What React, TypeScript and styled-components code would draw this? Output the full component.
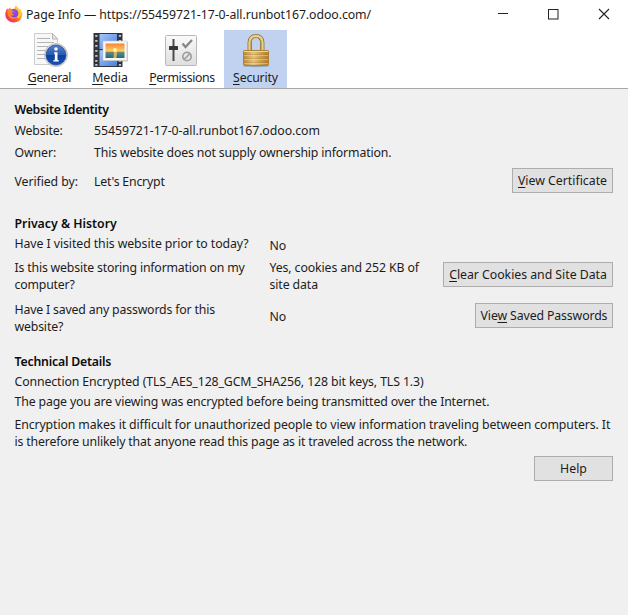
import React from 'react';
import styled, { createGlobalStyle } from 'styled-components';

const Global = createGlobalStyle`
  html, body { margin: 0; padding: 0; background: #f0f0f0; }
  * { box-sizing: border-box; }
  body { overflow: hidden; }
`;

const Window = styled.div`
  width: 628px;
  height: 615px;
  background: #f0f0f0;
  color: #1c1c1c;
  font-family: 'Noto Sans', 'Open Sans', sans-serif;
  font-size: 12.3px;
  line-height: 17px;
  white-space: nowrap;
`;

const TitleBar = styled.header`
  display: flex;
  align-items: center;
  height: 28px;
  padding: 0 16px 0 5px;
  background: #fff;
`;

const Title = styled.div`
  flex: 1;
  margin-left: 3px;
`;

const Controls = styled.div`
  display: flex;
  gap: 37px;
  svg { display: block; }
`;

const Toolbar = styled.nav`
  display: flex;
  height: 61px;
  padding: 2px 0 0 19px;
  background: #fff;
  border-bottom: 1px solid #a8a8a8;
`;

const Tab = styled.button<{ $width: number; $active?: boolean }>`
  display: flex;
  flex-direction: column;
  align-items: center;
  width: ${(p) => p.$width}px;
  height: 58px;
  padding: 3px 0 0;
  border: 0;
  background: ${(p) => (p.$active ? '#c0d2f0' : 'transparent')};
  color: inherit;
  font: inherit;
  svg { display: block; flex: none; }
`;

const Key = styled.span`
  text-decoration: underline;
  text-decoration-thickness: 1px;
  text-underline-offset: 2px;
  text-decoration-skip-ink: none;
`;

const Text = styled.span<{ $track?: number; $drop?: number; $lift?: number }>`
  letter-spacing: ${(p) => p.$track ?? 0}px;
  padding-top: ${(p) => p.$drop ?? 0}px;
  padding-bottom: ${(p) => p.$lift ?? 0}px;
`;

const Content = styled.main`
  padding: 12px 15px 0 14.5px;
`;

const Heading = styled.h2<{ $track?: number }>`
  margin: 0;
  height: 17px;
  font-size: 12.3px;
  font-weight: 600;
  color: #0c0c0c;
  letter-spacing: ${(p) => p.$track ?? 0}px;
`;

const Row = styled.div<{ $top: number; $height?: number; $columns: string }>`
  display: grid;
  grid-template-columns: ${(p) => p.$columns};
  align-items: center;
  height: ${(p) => p.$height ?? 17}px;
  margin-top: ${(p) => p.$top}px;
`;

const Section = styled.section<{ $top?: number }>`
  padding-top: ${(p) => p.$top ?? 0}px;
`;

const Paragraph = styled.p<{ $top: number; $track?: number }>`
  margin: ${(p) => p.$top}px 0 0;
  letter-spacing: ${(p) => p.$track ?? 0}px;
`;

const PushButton = styled.button<{ $width: number; $track?: number; $lift?: number }>`
  width: ${(p) => p.$width}px;
  height: 25px;
  margin: 0 0 ${(p) => p.$lift ?? 0}px;
  padding: 0;
  border: 1px solid #adadad;
  background: #e1e1e1;
  color: inherit;
  font: inherit;
  letter-spacing: ${(p) => p.$track ?? 0}px;
`;

const Footer = styled.footer`
  display: flex;
  justify-content: flex-end;
  padding-top: 6px;
`;

const FirefoxIcon = () => (
  <svg width="18" height="18" viewBox="0 0 18 18">
    <defs>
      <linearGradient id="fire" x1="0.85" y1="0.1" x2="0.15" y2="0.85">
        <stop offset="0" stopColor="#ffe14a" />
        <stop offset="0.4" stopColor="#ffa02a" />
        <stop offset="0.7" stopColor="#ff5038" />
        <stop offset="1" stopColor="#f0305c" />
      </linearGradient>
      <radialGradient id="globe" cx="0.5" cy="0.3" r="0.7">
        <stop offset="0" stopColor="#a54de8" />
        <stop offset="1" stopColor="#6a48dc" />
      </radialGradient>
    </defs>
    <path d="M8.700 17.500C4 17.500.3 13.900.3 9.300.3 6.500 1.300 4.500 2.400 3.200L3 4.700C3.700 3.700 4.400 3.100 5.300 2.600L5.600 4 7.500 4 9.600 3.200C9.700 1.900 10.200 1 11 .3 11.500 2 12.900 2.700 14.200 4.200L14.800 3.800C16.500 5.500 17.300 7.300 17.300 9.500 17.300 13.900 13.500 17.500 8.700 17.500Z" fill="url(#fire)" />
    <circle cx="9" cy="8.300" r="4.400" fill="url(#globe)" />
    <path d="M2.500 5.700C3.800 4.300 5.300 4.600 6.500 5.500L8.600 5.900C8.300 7.100 7 7 6.600 8 6.800 9.300 8.300 9.100 9.300 9.600 8.300 10.800 6.900 10.600 5.800 10.300 6.800 12.600 10 13.200 12.500 11.300 11 14.700 5 14.700 3.200 10.400Z" fill="#ff8a2c" />
    <path d="M11 2.500C15.700 6 15.500 10.300 12.800 12.500" fill="none" stroke="#ffcb35" strokeWidth="1.900" />
  </svg>
);

const GeneralIcon = () => (
  <svg width="36" height="36" viewBox="0 0 36 36">
    <defs>
      <linearGradient id="info" x1="0" y1="0" x2="0" y2="1">
        <stop offset="0" stopColor="#547fc9" />
        <stop offset="0.49" stopColor="#285bb4" />
        <stop offset="0.5" stopColor="#07429f" />
        <stop offset="1" stopColor="#194faf" />
      </linearGradient>
    </defs>
    <path d="M2.500.5H20L25.500 6V31.500H2.500Z" fill="#f8f8f8" stroke="#cdcdcd" />
    <path d="M20.500.5V6H25.500Z" fill="#e6e6e6" stroke="#b5b5b5" />
    <path d="M5 5.500H18M5 9.500H22M5 13.500H22M5 17.500H15M5 21.500H14M5 25.500H14" stroke="#b4b4b4" />
    <circle cx="24" cy="22" r="11.500" fill="#d9d9d9" stroke="#b3b3b3" strokeWidth=".7" />
    <circle cx="24" cy="22" r="10" fill="url(#info)" stroke="#174390" strokeWidth=".7" />
    <circle cx="24" cy="16" r="1.800" fill="#fff" />
    <path d="M22 19.200H25.500V27.200H26.800V28.500H21.300V27.200H22.800V20.500H22Z" fill="#fff" />
  </svg>
);

const MediaIcon = () => {
  const holes = [2, 7, 12, 17, 22, 27, 31];
  return (
    <svg width="36" height="36" viewBox="0 0 36 36">
      <defs>
        <linearGradient id="film" x1="0" y1="0" x2="1" y2="1">
          <stop offset="0" stopColor="#a8c6ff" />
          <stop offset="1" stopColor="#4a7fdc" />
        </linearGradient>
        <linearGradient id="sunset" x1="0" y1="0" x2="0" y2="1">
          <stop offset="0" stopColor="#f78338" />
          <stop offset="0.54" stopColor="#ffd262" />
          <stop offset="0.58" stopColor="#6b8c80" />
          <stop offset="1" stopColor="#236984" />
        </linearGradient>
      </defs>
      <rect x="1.500" y="0" width="29" height="34" rx=".5" fill="#30353b" />
      <rect x="7.500" y="1" width="17.500" height="15" fill="url(#film)" />
      <rect x="7.500" y="17.200" width="17.500" height="15.800" fill="url(#film)" />
      {holes.map((y) => (
        <g key={y} fill="#c4c9ce">
          <rect x="3.200" y={y} width="2.300" height="1.800" />
          <rect x="26.800" y={y} width="2.300" height="1.800" />
        </g>
      ))}
      <rect x="11.500" y="9" width="24.300" height="19.500" fill="#91969b" opacity=".6" />
      <rect x="11" y="8" width="24" height="19.500" fill="#f7f7f7" stroke="#c8c8c8" strokeWidth=".6" />
      <rect x="13.500" y="10.500" width="19" height="14.500" fill="url(#sunset)" />
      <circle cx="23" cy="17" r="2" fill="#fff69c" />
      <path d="M22 19H25L24.500 25H21.500Z" fill="#f3c553" opacity=".8" />
    </svg>
  );
};

const PermissionsIcon = () => (
  <svg width="36" height="36" viewBox="0 0 36 36">
    <defs>
      <linearGradient id="panel" x1="0" y1="0" x2="0" y2="1">
        <stop offset="0" stopColor="#fafafa" />
        <stop offset="1" stopColor="#dedede" />
      </linearGradient>
    </defs>
    <rect x="1.500" y="2.500" width="31" height="30" rx="1" fill="url(#panel)" stroke="#b8b8b8" />
    <path d="M9.500 6V28" stroke="#4b4b4b" strokeWidth="2" />
    <rect x="5" y="13" width="9" height="4" rx=".5" fill="#363636" />
    <path d="M18.500 10.500L21.500 14 28 7" fill="none" stroke="#858585" strokeWidth="2.200" />
    <circle cx="23" cy="23.500" r="4.200" fill="none" stroke="#a0a0a0" strokeWidth="1.700" />
    <path d="M20 26.500L26 20.500" stroke="#a0a0a0" strokeWidth="1.700" />
  </svg>
);

const SecurityIcon = () => (
  <svg width="36" height="36" viewBox="0 0 36 36">
    <defs>
      <linearGradient id="brass" x1="0" y1="0" x2="1" y2="0">
        <stop offset="0" stopColor="#bb8a35" />
        <stop offset="0.4" stopColor="#e3c47c" />
        <stop offset="0.65" stopColor="#cda452" />
        <stop offset="1" stopColor="#ad7d2b" />
      </linearGradient>
    </defs>
    <path d="M11.700 19V9.500C11.700.8 24.300.8 24.300 9.500V19" fill="none" stroke="#8b6d27" strokeWidth="4.200" />
    <path d="M11.700 19V9.500C11.700.8 24.300.8 24.300 9.500V19" fill="none" stroke="#e8d28d" strokeWidth="2.700" />
    <path d="M12.500 19V9.500C12.500 2.500 23.500 2.500 23.500 9.500V19" fill="none" stroke="#bc9b4c" strokeWidth=".8" />
    <ellipse cx="18" cy="33" rx="13" ry="1.200" fill="#96a7c3" />
    <rect x="5.500" y="17.500" width="25" height="15" rx="1" fill="url(#brass)" stroke="#ad8138" />
    <path d="M6 18.500H30" stroke="#f2d993" />
    <path d="M6 21.500H30M6 25.500H30M6 29.500H30" stroke="#a87526" opacity=".3" />
    <path d="M6 22.500H30M6 26.500H30M6 30.500H30" stroke="#f5dc98" opacity=".5" />
  </svg>
);

const identityColumns = '79.5px 1fr auto';
const historyColumns = '255px 1fr auto';

export default function App() {
  return (
    <Window>
      <Global />
      <TitleBar>
        <FirefoxIcon />
        <Title><Text $track={-0.07}>Page Info — https://55459721-17-0-all.runbot167.odoo.com/</Text></Title>
        <Controls>
          <svg width="14" height="14" viewBox="0 0 14 14"><path d="M2 6.500H12" stroke="#222" /></svg>
          <svg width="14" height="14" viewBox="0 0 14 14"><rect x="1.500" y="2.500" width="9.500" height="9.500" fill="none" stroke="#222" /></svg>
          <svg width="14" height="14" viewBox="0 0 14 14"><path d="M1 2L11 12M11 2L1 12" stroke="#222" strokeWidth="1.100" /></svg>
        </Controls>
      </TitleBar>
      <Toolbar>
        <Tab $width={61}><GeneralIcon /><Text $track={-0.25}><Key>G</Key>eneral</Text></Tab>
        <Tab $width={60}><MediaIcon /><Text><Key>M</Key>edia</Text></Tab>
        <Tab $width={84}><PermissionsIcon /><Text $track={-0.4}><Key>P</Key>ermissions</Text></Tab>
        <Tab $width={63} $active><SecurityIcon /><Text $track={-0.15}><Key>S</Key>ecurity</Text></Tab>
      </Toolbar>
      <Content>
        <Section>
          <Heading $track={-0.29}>Website Identity</Heading>
          <Row $top={4} $columns={identityColumns}>
            <Text $track={-0.15}>Website:</Text><Text $track={-0.055}>55459721-17-0-all.runbot167.odoo.com</Text>
          </Row>
          <Row $top={5} $columns={identityColumns}>
            <Text $track={-0.1}>Owner:</Text><Text $track={-0.155}>This website does not supply ownership information.</Text>
          </Row>
          <Row $top={7} $height={25} $columns={identityColumns}>
            <Text $track={-0.08} $drop={1}>Verified by:</Text><Text $track={-0.2} $drop={1}>Let's Encrypt</Text>
            <PushButton $width={101}><Key>V</Key>iew Certificate</PushButton>
          </Row>
        </Section>
        <Section $top={22}>
          <Heading>Privacy &amp; History</Heading>
          <Row $top={3} $columns={historyColumns}>
            <Text $track={-0.075} $lift={2}>Have I visited this website prior to today?</Text><Text $drop={1}>No</Text>
          </Row>
          <Row $top={7} $height={34} $columns={historyColumns}>
            <Text $track={-0.18}>Is this website storing information on my<br />computer?</Text>
            <Text $track={-0.11}>Yes, cookies and 252 KB of<br />site data</Text>
            <PushButton $width={170} $track={-0.03} $lift={4}><Key>C</Key>lear Cookies and Site Data</PushButton>
          </Row>
          <Row $top={8} $height={34} $columns={historyColumns}>
            <Text $track={-0.17}>Have I saved any passwords for this<br />website?</Text>
            <Text $lift={3}>No</Text>
            <PushButton $width={138} $track={-0.12} $lift={6}>Vie<Key>w</Key> Saved Passwords</PushButton>
          </Row>
        </Section>
        <Section $top={18}>
          <Heading $track={-0.2}>Technical Details</Heading>
          <Paragraph $top={3} $track={-0.112}>Connection Encrypted (TLS_AES_128_GCM_SHA256, 128 bit keys, TLS 1.3)</Paragraph>
          <Paragraph $top={3} $track={-0.148}>The page you are viewing was encrypted before being transmitted over the Internet.</Paragraph>
          <Paragraph $top={6} $track={-0.115}>
            Encryption makes it difficult for unauthorized people to view information traveling between computers. It<br />
            <Text $track={-0.16}>is therefore unlikely that anyone read this page as it traveled across the network.</Text>
          </Paragraph>
        </Section>
        <Footer><PushButton $width={79}>Help</PushButton></Footer>
      </Content>
    </Window>
  );
}
